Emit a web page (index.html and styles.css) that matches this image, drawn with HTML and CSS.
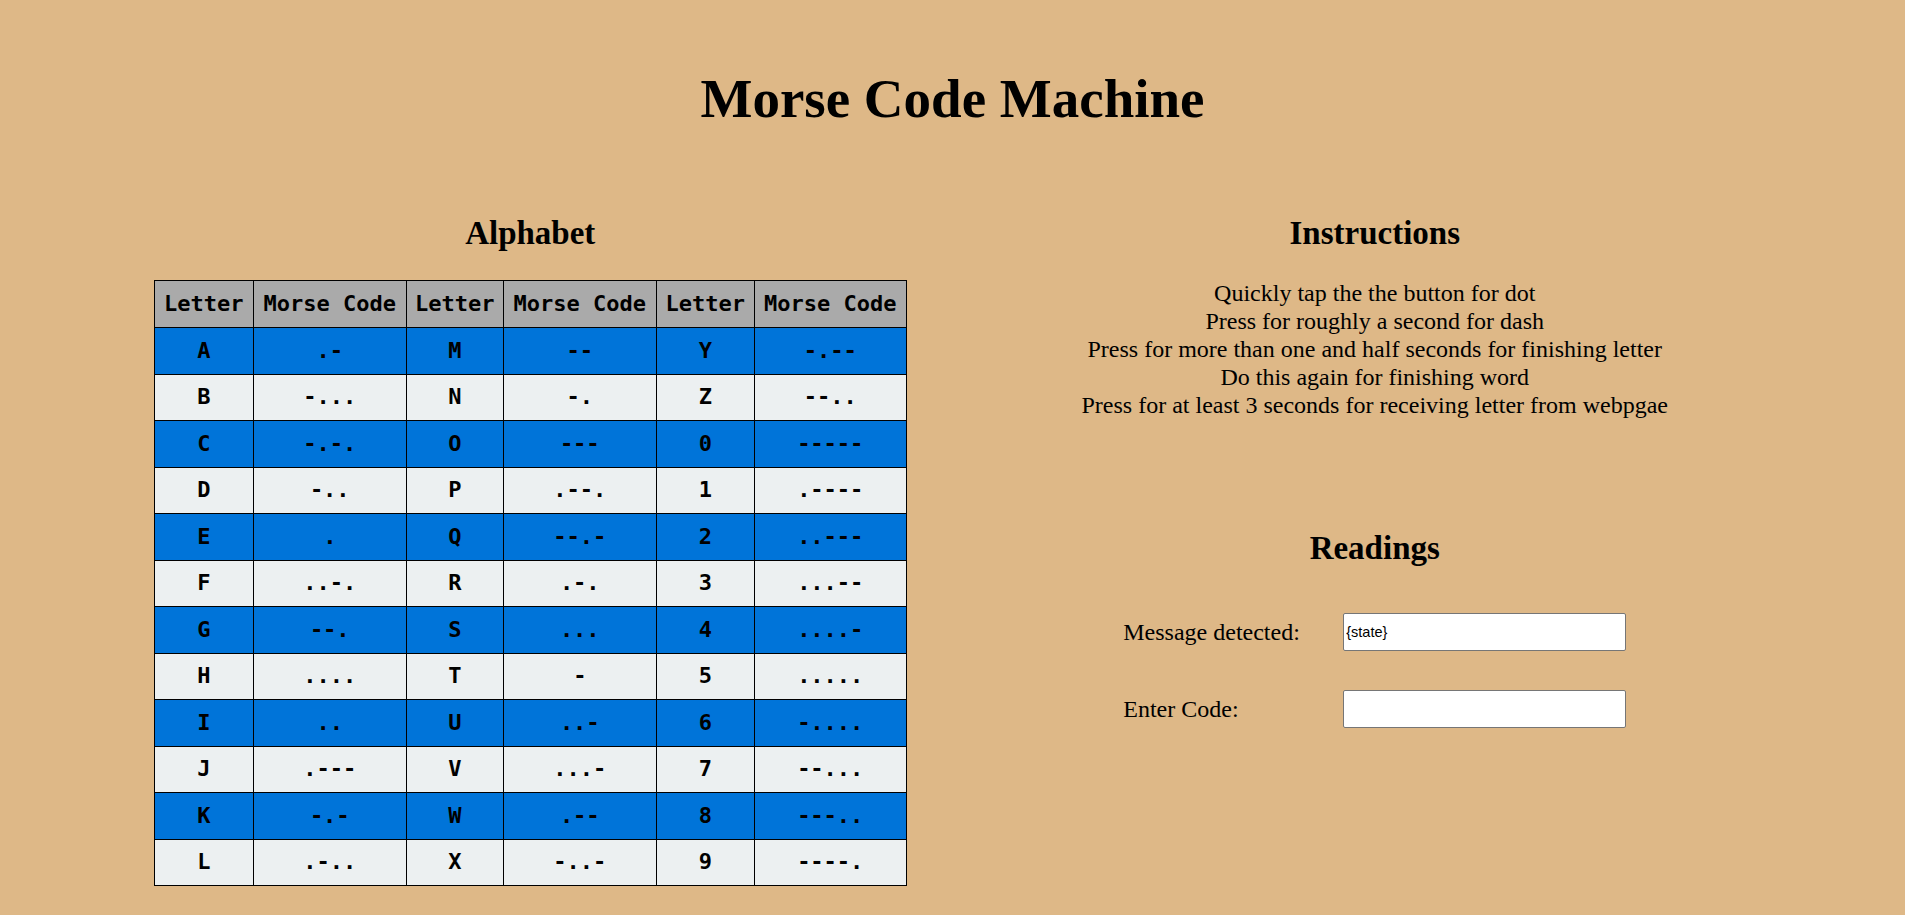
FILE: index.html
```html
<!DOCTYPE html>
<html lang="en">
<head>
<meta charset="utf-8">
<title>Morse Code Machine</title>
<link rel="stylesheet" href="styles.css">
</head>
<body>
<header class="page-header">
  <h1 class="title">Morse Code Machine</h1>
</header>
<main class="columns">
  <section class="col col-left">
    <h2 class="heading">Alphabet</h2>
    <table class="alphabet">
      <colgroup>
        <col class="c-letter"><col class="c-code"><col class="c-letter2"><col class="c-code"><col class="c-letter3"><col class="c-code2">
      </colgroup>
      <thead>
        <tr><th>Letter</th><th>Morse Code</th><th>Letter</th><th>Morse Code</th><th>Letter</th><th>Morse Code</th></tr>
      </thead>
      <tbody>
        <tr class="blue"><td>A</td><td>.-</td><td>M</td><td>--</td><td>Y</td><td>-.--</td></tr>
        <tr class="light"><td>B</td><td>-...</td><td>N</td><td>-.</td><td>Z</td><td>--..</td></tr>
        <tr class="blue"><td>C</td><td>-.-.</td><td>O</td><td>---</td><td>0</td><td>-----</td></tr>
        <tr class="light"><td>D</td><td>-..</td><td>P</td><td>.--.</td><td>1</td><td>.----</td></tr>
        <tr class="blue"><td>E</td><td>.</td><td>Q</td><td>--.-</td><td>2</td><td>..---</td></tr>
        <tr class="light"><td>F</td><td>..-.</td><td>R</td><td>.-.</td><td>3</td><td>...--</td></tr>
        <tr class="blue"><td>G</td><td>--.</td><td>S</td><td>...</td><td>4</td><td>....-</td></tr>
        <tr class="light"><td>H</td><td>....</td><td>T</td><td>-</td><td>5</td><td>.....</td></tr>
        <tr class="blue"><td>I</td><td>..</td><td>U</td><td>..-</td><td>6</td><td>-....</td></tr>
        <tr class="light"><td>J</td><td>.---</td><td>V</td><td>...-</td><td>7</td><td>--...</td></tr>
        <tr class="blue"><td>K</td><td>-.-</td><td>W</td><td>.--</td><td>8</td><td>---..</td></tr>
        <tr class="light"><td>L</td><td>.-..</td><td>X</td><td>-..-</td><td>9</td><td>----.</td></tr>
      </tbody>
    </table>
  </section>
  <section class="col col-right">
    <h2 class="heading">Instructions</h2>
    <p class="instructions">Quickly tap the the button for dot<br>Press for roughly a second for dash<br>Press for more than one and half seconds for finishing letter<br>Do this again for finishing word<br>Press for at least 3 seconds for receiving letter from webpgae</p>
    <h2 class="heading readings-heading">Readings</h2>
    <div class="readings">
      <label class="label" for="msg">Message detected:</label>
      <input class="field" id="msg" type="text" value="{state}">
      <label class="label" for="code">Enter Code:</label>
      <input class="field" id="code" type="text">
    </div>
  </section>
</main>
</body>
</html>
```

FILE: styles.css
```css
html, body {
  margin: 0;
  padding: 0;
}

body {
  background: #deb887;
  font-family: "Liberation Serif", "Times New Roman", serif;
  color: #000;
  width: 1905px;
  min-height: 915px;
}

.page-header {
  padding-top: 67px;
  text-align: center;
}

.title {
  margin: 0;
  font-size: 55px;
  line-height: 63px;
  font-weight: bold;
}

.columns {
  display: flex;
  padding: 84px 108px 0;
}

.col {
  flex: 1 1 0;
  display: flex;
  flex-direction: column;
  align-items: center;
}

.heading {
  margin: 0;
  font-size: 33px;
  line-height: 38px;
  font-weight: bold;
  text-align: center;
}

.alphabet {
  margin-top: 28px;
  border-collapse: collapse;
  table-layout: fixed;
  width: 752px;
  font-family: "DejaVu Sans Mono", "Liberation Mono", monospace;
  font-size: 22px;
  font-weight: bold;
  text-align: center;
}

.c-letter { width: 99px; }
.c-letter2 { width: 97px; }
.c-letter3 { width: 98px; }
.c-code { width: 153px; }
.c-code2 { width: 152px; }

.alphabet th,
.alphabet td {
  border: 1px solid #000;
  padding: 0;
  height: 45.5px;
  line-height: 24px;
  white-space: nowrap;
}

.alphabet th {
  background: #aaaaaa;
  height: 46px;
}

.alphabet .blue td {
  background: #0074d9;
}

.alphabet .light td {
  background: #ecf0f1;
}

.instructions {
  margin: 27px 0 0;
  font-size: 24px;
  line-height: 28px;
  text-align: center;
}

.readings-heading {
  margin-top: 110px;
}

.readings {
  margin-top: 46px;
  display: grid;
  grid-template-columns: 220px 283px;
  row-gap: 39px;
  align-items: center;
}

.label {
  font-size: 24px;
  line-height: 27px;
}

.field {
  box-sizing: border-box;
  width: 283px;
  height: 38px;
  margin: 0;
  padding: 1px 2px;
  border: 1px solid #767676;
  border-radius: 2px;
  background: #fff;
  font-family: "Liberation Sans", Arial, sans-serif;
  font-size: 14.5px;
  color: #000;
}
```
